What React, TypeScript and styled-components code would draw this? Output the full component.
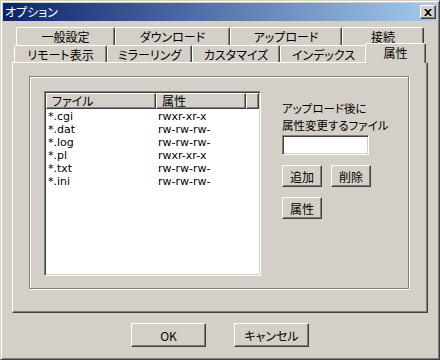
import styled, { createGlobalStyle } from 'styled-components'

const GlobalStyle = createGlobalStyle`
  body {
    margin: 0;
    background: #d4d0c8;
    font-family: "Noto Sans CJK JP", "Noto Sans", sans-serif;
    font-size: 12px;
    color: #000;
  }
`

const face = '#d4d0c8'
const shadow = '#808080'
const dark = '#404040'

const Window = styled.div`
  width: 440px;
  height: 360px;
  box-sizing: border-box;
  background: ${face};
  border: 1px solid;
  border-color: ${face} ${dark} ${dark} ${face};
  box-shadow: inset 1px 1px 0 #fff, inset -1px -1px 0 ${shadow};
  padding: 2px;
  display: flex;
  flex-direction: column;
`

const TitleBar = styled.div`
  height: 18px;
  display: flex;
  align-items: center;
  justify-content: space-between;
  padding: 0 1px 0 2px;
  background: linear-gradient(to right, #0a246a, #a6caf0);
  color: #fff;
  line-height: 18px;
  font-feature-settings: 'palt';
`

const CloseButton = styled.div`
  width: 16px;
  height: 14px;
  box-sizing: border-box;
  background: ${face};
  border: 1px solid;
  border-color: #fff ${dark} ${dark} #fff;
  box-shadow: inset -1px -1px 0 ${shadow};
  display: flex;
  align-items: center;
  justify-content: center;
`

const Body = styled.div`
  padding: 6px 9px 0 9px;
  display: flex;
  flex-direction: column;
`

const TabRow = styled.div<{ $indent: number; $h: number }>`
  display: flex;
  height: ${(p) => p.$h}px;
  margin-left: ${(p) => p.$indent}px;
  align-items: flex-start;
`

const Tab = styled.div<{ $w: number; $selected?: boolean }>`
  width: ${(p) => p.$w}px;
  height: ${(p) => (p.$selected ? 20 : 18)}px;
  box-sizing: border-box;
  flex: none;
  background: ${face};
  border: 1px solid;
  border-bottom: none;
  border-color: #fff ${dark} transparent #fff;
  border-radius: 2px 2px 0 0;
  box-shadow: inset -1px 0 0 ${shadow};
  display: flex;
  justify-content: center;
  align-items: ${(p) => (p.$selected ? 'flex-start' : 'center')};
  padding-top: ${(p) => (p.$selected ? 2 : 0)}px;
  line-height: 14px;
  font-feature-settings: 'palt';
  position: relative;
  z-index: ${(p) => (p.$selected ? 2 : 0)};
  margin: ${(p) => (p.$selected ? '-2px -2px 0 -2px' : '0')};
`

const Panel = styled.div`
  height: 251px;
  box-sizing: border-box;
  border: 1px solid;
  border-color: #fff ${dark} ${dark} #fff;
  box-shadow: inset -1px -1px 0 ${shadow};
  padding: 13px 18px 23px 16px;
  display: flex;
  position: relative;
  z-index: 1;
`

const GroupBox = styled.div`
  flex: 1;
  border: 1px solid ${shadow};
  box-shadow: inset 1px 1px 0 #fff, 1px 1px 0 #fff;
  padding: 14px 0 12px 14px;
  display: flex;
  gap: 21px;
`

const ListView = styled.div`
  width: 217px;
  box-sizing: border-box;
  background: #fff;
  border: 1px solid;
  border-color: ${shadow} #fff #fff ${shadow};
  box-shadow: inset 1px 1px 0 ${dark}, inset -1px -1px 0 ${face};
  padding: 1px;
  display: flex;
  flex-direction: column;
`

const Header = styled.div`
  display: flex;
  height: 16px;
`

const HeaderCell = styled.div<{ $w?: number }>`
  ${(p) => (p.$w ? `width: ${p.$w}px;` : 'flex: 1;')}
  box-sizing: border-box;
  background: ${face};
  border: 1px solid;
  border-color: #fff ${dark} ${dark} #fff;
  box-shadow: inset -1px -1px 0 ${shadow};
  padding-left: 5px;
  line-height: 14px;
  font-feature-settings: 'palt';
`

const Rows = styled.div`
  padding-top: 1px;
  font-family: "DejaVu Sans", sans-serif;
  font-size: 11px;
`

const Row = styled.div`
  display: flex;
  height: 13px;
  line-height: 13px;
`

const Cell = styled.div<{ $w: number }>`
  width: ${(p) => p.$w}px;
  padding-left: 2px;
  box-sizing: border-box;
`

const Side = styled.div`
  display: flex;
  flex-direction: column;
  align-items: flex-start;
  padding-top: 9px;
`

const Label = styled.div`
  font-size: 11.5px;
  line-height: 17px;
  font-feature-settings: 'palt';
`

const TextBox = styled.div`
  width: 87px;
  height: 20px;
  box-sizing: border-box;
  margin-top: 1px;
  background: #fff;
  border: 1px solid;
  border-color: ${shadow} #fff #fff ${shadow};
  box-shadow: inset 1px 1px 0 ${dark}, inset -1px -1px 0 ${face};
`

const ButtonRow = styled.div`
  display: flex;
  gap: 9px;
  margin-top: 10px;
`

const Button = styled.div<{ $w: number; $h: number }>`
  width: ${(p) => p.$w}px;
  height: ${(p) => p.$h}px;
  box-sizing: border-box;
  background: ${face};
  border: 1px solid;
  border-color: #fff ${dark} ${dark} #fff;
  box-shadow: inset -1px -1px 0 ${shadow};
  display: flex;
  align-items: center;
  justify-content: center;
  font-feature-settings: 'palt';
`

const Footer = styled.div`
  display: flex;
  justify-content: center;
  gap: 28px;
  margin-top: 10px;
`

const rowOne = [
  { name: '一般設定', w: 99 },
  { name: 'ダウンロード', w: 115 },
  { name: 'アップロード', w: 112 },
  { name: '接続', w: 82 },
]

const rowTwo = [
  { name: 'リモート表示', w: 93 },
  { name: 'ミラーリング', w: 85 },
  { name: 'カスタマイズ', w: 88 },
  { name: 'インデックス', w: 87 },
  { name: '属性', w: 61, selected: true },
]

const files = [
  ['*.cgi', 'rwxr-xr-x'],
  ['*.dat', 'rw-rw-rw-'],
  ['*.log', 'rw-rw-rw-'],
  ['*.pl', 'rwxr-xr-x'],
  ['*.txt', 'rw-rw-rw-'],
  ['*.ini', 'rw-rw-rw-'],
]

export default function App() {
  return (
    <>
      <GlobalStyle />
      <Window>
        <TitleBar>
          <span>オプション</span>
          <CloseButton>
            <svg width="8" height="7" viewBox="0 0 8 7">
              <path d="M0 0h2l2 2 2-2h2L5 3.5 8 7H6L4 5 2 7H0l3-3.5z" fill="#000" />
            </svg>
          </CloseButton>
        </TitleBar>
        <Body>
          <TabRow $indent={4} $h={18}>
            {rowOne.map((t) => (
              <Tab key={t.name} $w={t.w}>
                {t.name}
              </Tab>
            ))}
          </TabRow>
          <TabRow $indent={2} $h={17}>
            {rowTwo.map((t) => (
              <Tab key={t.name} $w={t.w} $selected={t.selected}>
                {t.name}
              </Tab>
            ))}
          </TabRow>
          <Panel>
            <GroupBox>
              <ListView>
                <Header>
                  <HeaderCell $w={110}>ファイル</HeaderCell>
                  <HeaderCell $w={90}>属性</HeaderCell>
                  <HeaderCell />
                </Header>
                <Rows>
                  {files.map(([name, attr]) => (
                    <Row key={name}>
                      <Cell $w={110}>{name}</Cell>
                      <Cell $w={90}>{attr}</Cell>
                    </Row>
                  ))}
                </Rows>
              </ListView>
              <Side>
                <Label>
                  アップロード後に
                  <br />
                  属性変更するファイル
                </Label>
                <TextBox />
                <ButtonRow>
                  <Button $w={40} $h={22}>追加</Button>
                  <Button $w={40} $h={22}>削除</Button>
                </ButtonRow>
                <ButtonRow>
                  <Button $w={40} $h={22}>属性</Button>
                </ButtonRow>
              </Side>
            </GroupBox>
          </Panel>
          <Footer>
            <Button $w={75} $h={24}>OK</Button>
            <Button $w={75} $h={24}>キャンセル</Button>
          </Footer>
        </Body>
      </Window>
    </>
  )
}
